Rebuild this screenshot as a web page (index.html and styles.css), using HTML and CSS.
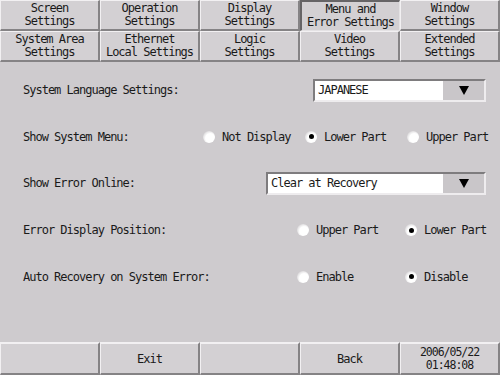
FILE: index.html
```html
<!DOCTYPE html>
<html lang="en">
<head>
  <meta charset="UTF-8" />
  <title>Menu and Error Settings</title>
  <link rel="stylesheet" href="styles.css">
</head>
<body>
  <nav class="tabs">
    <div class="tab">Screen<br>Settings</div>
    <div class="tab">Operation<br>Settings</div>
    <div class="tab">Display<br>Settings</div>
    <div class="tab active">Menu and<br>Error Settings</div>
    <div class="tab">Window<br>Settings</div>
    <div class="tab">System Area<br>Settings</div>
    <div class="tab">Ethernet<br>Local Settings</div>
    <div class="tab">Logic<br>Settings</div>
    <div class="tab">Video<br>Settings</div>
    <div class="tab">Extended<br>Settings</div>
  </nav>

  <main class="panel">
    <div class="row">
      <span class="label">System Language Settings:</span>
      <div class="dropdown lang">
        <span class="value">JAPANESE</span>
        <span class="arrow"></span>
      </div>
    </div>

    <div class="row">
      <span class="label">Show System Menu:</span>
      <div class="choices menu">
        <span class="radio"><i></i>Not Display</span>
        <span class="radio on"><i></i>Lower Part</span>
        <span class="radio"><i></i>Upper Part</span>
      </div>
    </div>

    <div class="row">
      <span class="label">Show Error Online:</span>
      <div class="dropdown error">
        <span class="value">Clear at Recovery</span>
        <span class="arrow"></span>
      </div>
    </div>

    <div class="row">
      <span class="label">Error Display Position:</span>
      <div class="choices wide">
        <span class="radio"><i></i>Upper Part</span>
        <span class="radio on"><i></i>Lower Part</span>
      </div>
    </div>

    <div class="row">
      <span class="label">Auto Recovery on System Error:</span>
      <div class="choices wide">
        <span class="radio"><i></i>Enable</span>
        <span class="radio on"><i></i>Disable</span>
      </div>
    </div>
  </main>

  <footer class="bar">
    <div class="btn"></div>
    <div class="btn">Exit</div>
    <div class="btn"></div>
    <div class="btn">Back</div>
    <div class="btn clock">2006/05/22<br>01:48:08</div>
  </footer>
</body>
</html>
```

FILE: styles.css
```css
html, body {
  margin: 0;
  padding: 0;
}
body {
  width: 500px;
  height: 375px;
  display: flex;
  flex-direction: column;
  background: #cecbce;
  color: #1a1a1a;
  font-family: "DejaVu Sans Mono", monospace;
  font-size: 12px;
  letter-spacing: -1px;
  overflow: hidden;
}

/* tab buttons */
.tabs {
  display: grid;
  grid-template-columns: repeat(5, 100px);
  grid-template-rows: 31px 31px;
}
.tab {
  box-sizing: border-box;
  display: flex;
  align-items: center;
  justify-content: center;
  text-align: center;
  line-height: 13px;
  background: #d3d0d3;
  border-top: 1px solid #f2f0f2;
  border-left: 1px solid #f2f0f2;
  border-right: 2px solid #858385;
  border-bottom: 2px solid #858385;
}
.tab.active {
  border-top: 2px solid #666466;
  border-left: 2px solid #666466;
  border-right: 1px solid #e4e2e4;
  border-bottom: 1px solid #e4e2e4;
}

/* settings rows */
.panel {
  flex: 1;
  padding-top: 5px;
}
.row {
  height: 46.6px;
  display: flex;
  align-items: center;
  padding-left: 23px;
}
.label {
  width: 180px;
  flex-shrink: 0;
  white-space: nowrap;
}

.dropdown {
  box-sizing: border-box;
  height: 23px;
  display: flex;
  align-items: center;
  background: #fff;
  border-top: 2px solid #7e7c7e;
  border-left: 2px solid #7e7c7e;
  border-right: 2px solid #eeecee;
  border-bottom: 2px solid #eeecee;
}
.dropdown.lang {
  width: 173px;
  margin-left: 110px;
}
.dropdown.error {
  width: 220px;
  margin-left: 63px;
}
.value {
  flex: 1;
  padding-left: 3px;
}
.arrow {
  width: 41px;
  height: 19px;
  background: #c9c6c9;
  display: flex;
  align-items: center;
  justify-content: center;
}
.arrow::before {
  content: "";
  border-left: 5px solid transparent;
  border-right: 5px solid transparent;
  border-top: 9px solid #000;
}

.choices {
  display: flex;
}
.choices.menu .radio {
  width: 102px;
}
.choices.wide {
  margin-left: 94px;
}
.choices.wide .radio {
  width: 108px;
}
.radio {
  display: flex;
  align-items: center;
}
.radio i {
  width: 12px;
  height: 12px;
  margin-right: 7px;
  border-radius: 50%;
  background: radial-gradient(circle at 60% 60%, #ffffff 45%, #dcdadc 75%, #b8b6b8 100%);
  display: flex;
  align-items: center;
  justify-content: center;
}
.radio.on i::before {
  content: "";
  width: 5px;
  height: 5px;
  border-radius: 50%;
  background: #000;
}

/* bottom buttons */
.bar {
  display: grid;
  grid-template-columns: repeat(5, 100px);
  height: 33px;
}
.btn {
  box-sizing: border-box;
  display: flex;
  align-items: center;
  justify-content: center;
  text-align: center;
  line-height: 12px;
  background: #d3d0d3;
  border-top: 2px solid #f2f0f2;
  border-left: 1px solid #f2f0f2;
  border-right: 2px solid #858385;
  border-bottom: 2px solid #858385;
}
.btn.clock {
  font-size: 11.5px;
  line-height: 12.5px;
}
```
